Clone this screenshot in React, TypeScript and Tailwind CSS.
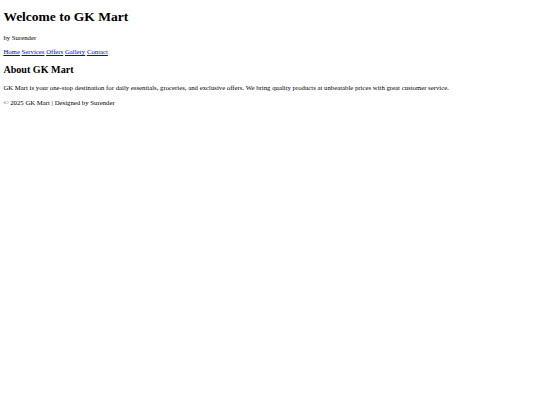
export default function App() {
  const links = ['Home', 'Services', 'Offers', 'Gallery', 'Contact'];

  return (
    <div className="min-h-[405px] bg-white px-[3.375px] pb-[3.375px] text-black font-['Liberation_Serif','Times_New_Roman',serif] text-[6.75px] leading-[7.7625px]">
      <header>
        <h1 className="mt-[9.045px] mb-[9.045px] text-[13.5px] leading-[15.525px] font-bold">Welcome to GK Mart</h1>
        <p className="my-[6.75px]">by Surender</p>
        <nav className="my-[6.75px]">
          {links.map((name, i) => (
            <span key={name}>
              <a href="#" className="text-[#0000ee] underline">
                {name}
              </a>
              {i < links.length - 1 ? ' ' : ''}
            </span>
          ))}
        </nav>
      </header>

      <section>
        <h2 className="my-[8.404px] text-[10.125px] leading-[11.644px] font-bold">About GK Mart</h2>
        <p className="my-[6.75px]">
          GK Mart is your one-stop destination for daily essentials, groceries, and exclusive offers. We bring quality
          products at unbeatable prices with great customer service.
        </p>
      </section>

      <footer>
        <p className="my-[6.75px]">© 2025 GK Mart | Designed by Surender</p>
      </footer>
    </div>
  );
}
